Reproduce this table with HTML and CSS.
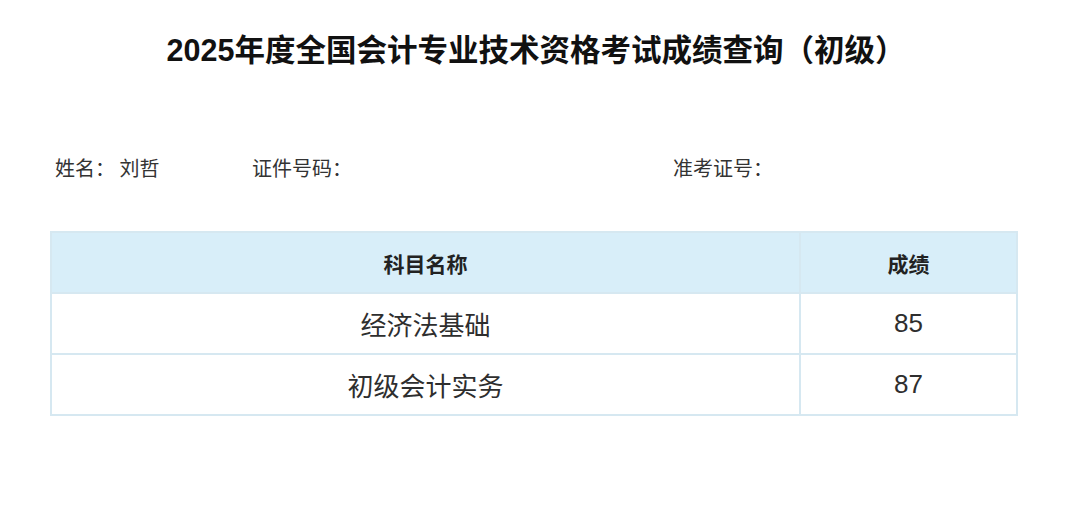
FILE: index.html
```html
<!DOCTYPE html>
<html lang="zh">
<head>
<meta charset="utf-8">
<link rel="stylesheet" href="styles.css">
</head>
<body>
<div class="page">
  <h1 class="title">2025年度全国会计专业技术资格考试成绩查询（初级）</h1>
  <div class="info">
    <span class="field name">姓名：&nbsp;刘哲</span>
    <span class="field idno">证件号码：</span>
    <span class="field examno">准考证号：</span>
  </div>
  <table class="scores">
    <thead>
      <tr><th class="c-subject">科目名称</th><th class="c-score">成绩</th></tr>
    </thead>
    <tbody>
      <tr><td class="subj">经济法基础</td><td class="num">85</td></tr>
      <tr><td class="subj">初级会计实务</td><td class="num">87</td></tr>
    </tbody>
  </table>
</div>
</body>
</html>
```
FILE: styles.css
```css
html, body {
  margin: 0;
  padding: 0;
  background: #fff;
}
body {
  font-family: "Noto Sans CJK SC", "Liberation Sans", sans-serif;
  color: #2b2b2b;
}
.page {
  width: 1080px;
  height: 519px;
  padding-top: 30px;
  box-sizing: border-box;
}
.title {
  margin: 0;
  text-align: center;
  font-size: 30.5px;
  font-weight: 700;
  color: #111;
  line-height: 40px;
  padding-right: 8px;
  font-family: "Liberation Sans", "Noto Sans CJK SC", sans-serif;
}
.info {
  display: flex;
  margin-top: 83px;
  padding-left: 55px;
  font-size: 20px;
  line-height: 30px;
  color: #333;
}
.name { width: 197px; }
.idno { width: 421px; }
.scores {
  margin: 48px 0 0 50px;
  width: 968px;
  border-collapse: collapse;
  table-layout: fixed;
}
.scores th, .scores td {
  border: 2px solid #d6e8f1;
  text-align: center;
  height: 59px;
  padding: 0;
}
.scores th {
  background: #d8eef9;
  font-size: 21px;
  font-weight: 700;
  color: #222;
}
.scores td.subj {
  font-size: 26px;
  color: #2e2e2e;
}
.scores td.num {
  font-size: 26px;
  color: #2e2e2e;
  font-family: "Liberation Sans", sans-serif;
}
.c-subject { width: 747px; }
```
